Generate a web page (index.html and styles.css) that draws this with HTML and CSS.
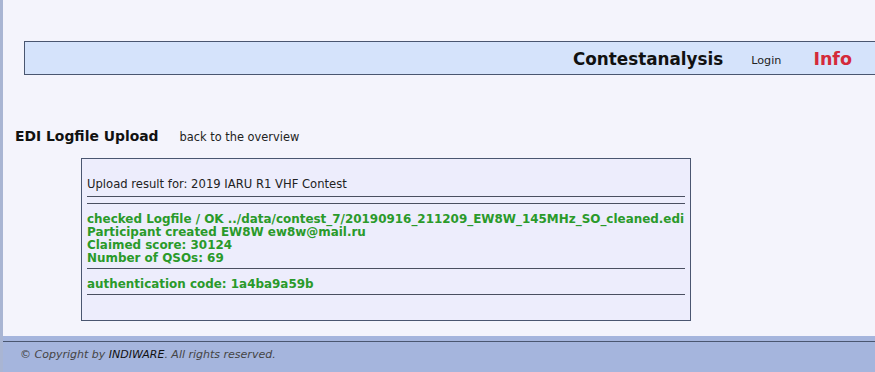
FILE: index.html
```html
<!DOCTYPE html>
<html lang="en">
<head>
<meta charset="utf-8">
<title>Contestanalysis - EDI Logfile Upload</title>
<link rel="stylesheet" href="styles.css">
</head>
<body>
<div class="page">
  <header class="topbar">
    <span class="brand">Contestanalysis</span>
    <a class="login" href="#">Login</a>
    <a class="info" href="#">Info</a>
  </header>
  <div class="titlerow">
    <h1 class="title">EDI Logfile Upload</h1>
    <a class="back" href="#">back to the overview</a>
  </div>
  <div class="result">
    <p class="event">Upload result for: 2019 IARU R1 VHF Contest</p>
    <div class="rule"></div>
    <div class="rule"></div>
    <div class="ok">checked Logfile / OK ../data/contest_7/20190916_211209_EW8W_145MHz_SO_cleaned.edi<br>Participant created EW8W ew8w@mail.ru<br>Claimed score: 30124<br>Number of QSOs: 69</div>
    <div class="rule"></div>
    <div class="ok">authentication code: 1a4ba9a59b</div>
    <div class="rule"></div>
  </div>
</div>
<footer class="footer">
  <div class="footer-inner">© Copyright by <span class="brandname">INDIWARE</span>. All rights reserved.</div>
</footer>
</body>
</html>
```
FILE: styles.css
```css
html, body {
  margin: 0;
  padding: 0;
}
body {
  background: #f4f4fc;
  border-left: 3px solid #a9b5d3;
  min-height: 372px;
  box-sizing: border-box;
  font-family: "DejaVu Sans", Verdana, sans-serif;
  color: #222;
  overflow: hidden;
}
a {
  color: #222;
  text-decoration: none;
}
.page {
  display: flex;
  flex-direction: column;
}
.topbar {
  margin: 41px 0 0 21px;
  height: 30px;
  border: 1px solid #4a5670;
  border-right: 0;
  background: #d5e3fb;
  display: flex;
  align-items: center;
  justify-content: flex-end;
  padding: 2px 23px 0 0;
  box-sizing: content-box;
}
.brand {
  font-weight: bold;
  font-size: 16.8px;
  color: #111;
}
.login {
  font-size: 11.2px;
  margin-left: 28px;
  padding-top: 2px;
}
.info {
  font-weight: bold;
  font-size: 17.5px;
  color: #d42a3a;
  margin-left: 32px;
}
.titlerow {
  margin-top: 52px;
  padding-left: 12px;
  display: flex;
  align-items: baseline;
  height: 18px;
}
.title {
  margin: 0;
  font-size: 13.9px;
  font-weight: bold;
  line-height: 18px;
  color: #111;
}
.back {
  font-size: 11.4px;
  margin-left: 21px;
}
.result {
  margin: 13px 0 0 78px;
  width: 598px;
  height: 161px;
  border: 1px solid #4a5670;
  background: #ededfc;
  padding: 0 5px;
  box-sizing: content-box;
}
.event {
  margin: 19px 0 0;
  font-size: 11.6px;
  line-height: 13px;
}
.rule {
  border-top: 1px solid #4a4f60;
  margin: 5px 0 0;
}
.rule + .rule {
  margin-top: 6px;
}
.ok {
  margin-top: 9px;
  font-size: 11.95px;
  line-height: 13px;
  font-weight: bold;
  color: #2a9a2a;
  white-space: nowrap;
}
.ok + .rule {
  margin-top: 3px;
}
.footer {
  margin-top: 15px;
  background: #a5b5dd;
  padding-top: 5px;
}
.footer-inner {
  border-top: 1px solid #4a5670;
  padding: 6px 0 20px 17px;
  font-size: 11px;
  font-style: italic;
  color: #444;
}
.brandname {
  color: #111;
}
```
